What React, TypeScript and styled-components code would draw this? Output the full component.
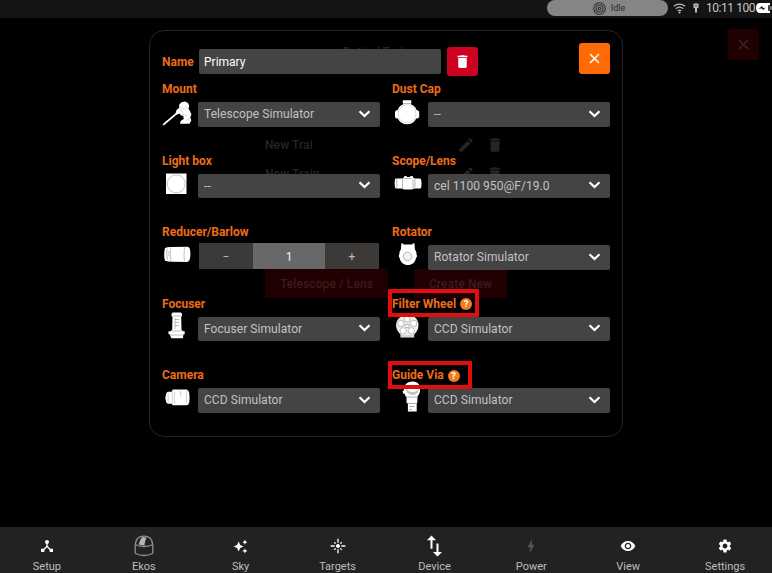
import React from "react";
import styled, { createGlobalStyle } from "styled-components";
import {
  MdAutoAwesome,
  MdBolt,
  MdDelete,
  MdDeviceHub,
  MdEdit,
  MdFlare,
  MdSettings,
  MdVisibility,
} from "react-icons/md";

const GlobalStyle = createGlobalStyle`
  * { box-sizing: border-box; }
  body { margin: 0; background: #000; overflow: hidden; }
  button, input { font: inherit; border: 0; padding: 0; margin: 0; }
  svg { display: block; flex: none; }
`;

const Screen = styled.div`
  width: 772px;
  height: 573px;
  display: grid;
  grid-template-columns: minmax(0, 1fr);
  grid-template-rows: 18px 1fr 46px;
  background: #000;
  font-family: Roboto, "Liberation Sans", sans-serif;
  overflow: hidden;
`;

/* ---------- status bar ---------- */

const StatusBar = styled.header`
  display: flex;
  justify-content: flex-end;
  background: #141414;
  color: #c4c4c4;
  overflow: hidden;
`;

const StatusPill = styled.div`
  width: 121px;
  height: 16px;
  margin-right: 5px;
  border-radius: 8px;
  background: #858585;
  color: #2c2c2c;
  display: flex;
  align-items: center;
  justify-content: center;
  gap: 5px;
  font-size: 9px;
  padding-left: 3px;
`;

const StatusIcons = styled.div`
  width: 32px;
  height: 16px;
  display: flex;
  align-items: center;
  gap: 7px;
`;

const Clock = styled.span`
  height: 17px;
  line-height: 17px;
  width: 51px;
  padding-left: 1px;
  font-size: 12px;
  letter-spacing: -0.45px;
  white-space: nowrap;
`;

const Battery = styled.div`
  width: 16px;
  height: 16px;
  display: flex;
  align-items: center;
`;

/* ---------- page behind the dialog ---------- */

const Main = styled.main`
  position: relative;
`;

const Backdrop = styled.section`
  height: 100%;
  display: flex;
  flex-direction: column;
  padding-top: 11px;
  color: #242424;
  font-weight: 500;
  font-size: 12px;
`;

const BackdropHeader = styled.div`
  height: 32px;
  display: grid;
  grid-template-columns: 1fr auto;
  padding-right: 13px;
  text-align: center;
`;

const BackdropTitle = styled.h1`
  margin: 0;
  padding: 16px 0 0 30px;
  font-size: 12px;
  line-height: 15px;
  font-weight: 500;
`;

const DimClose = styled.button`
  width: 31px;
  height: 31px;
  border-radius: 3px;
  background: #200000;
  display: grid;
  place-items: center;
`;

const TrainList = styled.div`
  display: flex;
  flex-direction: column;
  margin: 69px 0 0 265px;
  height: 121px;
`;

const TrainRow = styled.div`
  display: grid;
  grid-template-columns: 192px 29px 20px;
  align-items: center;
  height: 29px;
  letter-spacing: 0.1px;
`;

const BackdropActions = styled.div`
  display: flex;
  gap: 26px;
  margin: 18px 0 0 265px;
`;

const DimAction = styled.button<{ $width: number }>`
  width: ${(p) => p.$width}px;
  height: 29px;
  background: #200000;
  color: #3c1c1c;
  letter-spacing: 0.1px;
`;

/* ---------- dialog ---------- */

const DialogLayer = styled.div`
  position: absolute;
  inset: 0;
  padding: 12px 0 0 149px;
`;

const Dialog = styled.section`
  width: 474px;
  height: 407px;
  border: 1px solid #252525;
  border-radius: 15px;
  padding: 12px 12px 0 12px;
`;

const DialogHeader = styled.div`
  display: flex;
  height: 36px;
`;

const NameLabel = styled.label`
  width: 37px;
  line-height: 39px;
  font-size: 12px;
  font-weight: 700;
  color: #ee6c18;
`;

const NameInput = styled.input`
  width: 242px;
  height: 25px;
  margin-top: 6px;
  padding: 1px 5px 0;
  border-radius: 2px;
  background: #444;
  color: #fff;
  font-size: 12px;
`;

const SquareButton = styled.button<{ $tone: "danger" | "accent" }>`
  width: 31px;
  height: ${(p) => (p.$tone === "danger" ? 29 : 31)}px;
  margin: ${(p) => (p.$tone === "danger" ? "4px 0 0 6px" : "0 0 0 auto")};
  border-radius: 3px;
  background: ${(p) => (p.$tone === "danger" ? "#cd0220" : "#ff6a05")};
  color: #fff;
  display: grid;
  place-items: center;
`;

const Fields = styled.div`
  display: grid;
  grid-template-columns: 218px 218px;
  column-gap: 12px;
  grid-auto-rows: 71.5px;
`;

const Field = styled.div`
  display: grid;
  grid-template-columns: 36px 182px;
  grid-template-rows: 23px 24.5px;
`;

const FieldHead = styled.div`
  grid-column: 1 / -1;
  display: flex;
`;

const FieldLabel = styled.label`
  position: relative;
  z-index: 1;
  height: 19px;
  padding-top: 1px;
  display: flex;
  align-items: center;
  gap: 4px;
  color: #ee6c18;
  font-size: 12px;
  font-weight: 700;
  white-space: nowrap;
`;

const Highlight = styled.span<{ $right: number }>`
  position: absolute;
  inset: -4.5px ${(p) => -p.$right}px -4.5px -4px;
  border: 4px solid #e20d0d;
  border-radius: 1px;
`;

const HelpBadge = styled.span`
  width: 12px;
  height: 12px;
  margin-top: 1px;
  border-radius: 50%;
  background: #f47a1e;
  color: #fff;
  font-size: 9.5px;
  line-height: 12.5px;
  text-align: center;
`;

const DeviceIcon = styled.div`
  display: flex;
  align-items: center;
  svg { overflow: visible; }
`;

const Select = styled.button`
  height: 24.5px;
  padding: 0 9px 0 6px;
  border-radius: 2px;
  background: #444;
  color: #c2c2c2;
  font-size: 12px;
  letter-spacing: 0.06px;
  display: flex;
  align-items: center;
  justify-content: space-between;
  text-align: left;
  white-space: nowrap;
`;

const Stepper = styled.div`
  height: 26px;
  margin: -2px 0 0 1px;
  display: grid;
  grid-template-columns: 54px 72px 54px;
`;

const StepCell = styled.button<{ $value?: boolean }>`
  background: ${(p) => (p.$value ? "#686868" : "#3b3a39")};
  color: ${(p) => (p.$value ? "#f2f2f2" : "#bcbcbc")};
  font-size: 12px;
  line-height: 16px;
  padding-top: 1px;
  display: grid;
  place-items: center;
`;

/* ---------- bottom navigation ---------- */

const NavBar = styled.nav`
  display: grid;
  grid-template-columns: repeat(8, 96.9px);
  justify-content: center;
  background: #222;
`;

const NavItem = styled.button<{ $dim?: boolean }>`
  display: grid;
  grid-template-rows: 33px 13px;
  height: 46px;
  justify-items: center;
  background: transparent;
  color: #bdbdbd;
  font-size: 11px;
  svg {
    align-self: center;
    margin-top: 5px;
    color: ${(p) => (p.$dim ? "#555" : "#fff")};
  }
  span { line-height: 13px; }
`;

/* ---------- drawings ---------- */

const Chevron = () => (
  <svg width="13" height="9" viewBox="0 0 13 9" fill="none" stroke="#fff" strokeWidth="2.2">
    <path d="M1.5 1.3 6.5 6.1l5-4.8" />
  </svg>
);

const Cross = ({ color = "#fff" }: { color?: string }) => (
  <svg width="11" height="11" viewBox="0 0 11 11" stroke={color} strokeWidth="1.5">
    <path d="m1 1 9 9M10 1l-9 9" />
  </svg>
);

const Art = ({ children, box = "0 0 36 28" }: { children: React.ReactNode; box?: string }) => (
  <svg width="36" height="28" viewBox={box} fill="#fff" stroke="none">
    {children}
  </svg>
);

const MountArt = () => (
  <Art box="0.5 0 36 28">
    <path d="M1 24.200 14 13.200l1.200-3.400L17.500 8l.3-3.600 2.200-2.200 3.500-.7 3 1.500 1.300 3-.8 2.500 1.800 3.200 1.200 2.800-1.200 2.600 1 3.400-1.800 3.300h-9.500l.8-3 3-1.800-.6-3-2.200-.6-1.500-2-3 1.300L2.300 25.600Z" />
    <path d="m18 7 6 2.500m-6-1 3.500 4m2-6 3 2m-6 6 5 1m-1 5 4-2.500" fill="none" stroke="#b8b8b8" strokeWidth=".6" />
  </Art>
);

const LightBoxArt = () => (
  <Art box="0 0.5 36 28">
    <path d="M4 2h20.500v20.500H4Z" />
    <circle cx="14.300" cy="12.300" r="9" fill="none" stroke="#b5b5b5" strokeWidth=".8" />
  </Art>
);

const ReducerArt = () => (
  <Art box="0 0.5 36 28">
    <path d="M3 5.500Q6 4 10 4.500l15-.3q2.500 0 3 2.800.8 5 0 9-.5 3-3 3.500l-15-.2q-4 0-7-1Q1.300 12 3 5.500Z" />
    <path d="M5 6q-1 6 .5 11M9 5q-1.500 7 0 14M22.500 5q-1 7 0 14M6 9l2 1-2 2 2 2" fill="none" stroke="#aaa" strokeWidth=".7" />
  </Art>
);

const FocuserArt = () => (
  <Art box="0 -1 36 28">
    <path d="M9.500-2 10.500-3.500h8.500l1 1.500v2l-.8 1 .3 12.800 1.700 1.500h1.500v3H21.500l-.7 4H9.200l-1.500-4H6.500v-3h2l1.700-1.500L10.500 1l-1-1Z" />
    <path d="M10.500 0h9M13 2v11M13 3.500h4M13 6.500h4M13 9.500h4M9.500 15h11M8 19h13.500" fill="none" stroke="#999" strokeWidth=".65" />
  </Art>
);

const CameraArt = () => (
  <Art box="-0.7 -0.7 36 28">
    <path d="M3.500 6.500 5 5h4l1-2.200h14q2 1 2.500 3.200.8 5 0 10-.5 2-2.500 2.500H10L9 17H5L3.500 15.500Q1.800 11 3.500 6.500Z" />
    <path d="M5.500 6v10M9.500 4v13M18 4v6M12 5q-1 6 0 12M24 4v13" fill="none" stroke="#bbb" strokeWidth=".7" />
  </Art>
);

const DustCapArt = () => (
  <Art>
    <path d="M10.800.300h8.500v3l-.5 1q4.500 1.700 5.700 5.700 2.400 0 2.700 2v5q-.5 1.500-3 1.500-2.600 5.700-9.200 5.800-6.400 0-9.200-5.800-2.500 0-2.800-1.500v-5q.5-2 2.800-2 1.200-4 5.500-5.700l-.5-1Z" />
    <circle cx="15" cy="13.800" r="9" fill="none" stroke="#ccc" strokeWidth=".7" />
    <path d="M11 3.500h8" stroke="#999" strokeWidth=".7" />
  </Art>
);

const ScopeArt = () => (
  <Art box="0 0.5 36 28">
    <path d="M3 7.500 4 7h6l1.500-.5 1-2h2l.5 1h3l.5-1h2l1 2 1 .5h5.500q1 .2 1.200 1.200.7 4 0 8-.2.800-1.200.8H22l-2 1h-8l-2-1H4l-1-.8q-.8-4.500 0-8.700Z" />
    <path d="M4.800 7.500v9M10.500 7.500v9M21 7.500v9M23 8v8M12 7h8" fill="none" stroke="#999" strokeWidth=".7" />
  </Art>
);

const RotatorArt = () => (
  <Art box="-0.4 0.5 36 28">
    <path d="M9 .800 10.500 1l.7 1h8.600l.7-1 1.500-.2.500 6 1.500 3v2l.5.800v2l-.8.700q-.8 5-5.200 6.700-3 1-6 0-4.500-1.500-5.300-6.700l-.7-.7v-2l.5-.8v-2l1.500-3Z" />
    <circle cx="15.200" cy="14" r="4.300" fill="#f2f2f2" stroke="#aaa" strokeWidth=".9" />
  </Art>
);

const FilterWheelArt = () => (
  <Art box="0 -1.500 36 28">
    <path d="M9 0Q15-3 22 0q4.500 3.500 4.500 8.500 0 5.500-4.300 9.500v3H8.500v-3Q4.200 14 4 8.500 4.200 3 9 0Z" fill="#eee" />
    <g fill="#fff" stroke="#a0a0a0" strokeWidth=".7">
      <circle cx="15.200" cy="2.500" r="3" />
      <circle cx="8.800" cy="7" r="3.200" />
      <circle cx="21.700" cy="7" r="3.200" />
      <circle cx="11.200" cy="14.300" r="3.200" />
      <circle cx="19.300" cy="14.300" r="3.200" />
      <path d="m13 8 4.500 0-1 3h-2.500ZM9 19.500h13" />
    </g>
  </Art>
);

const GuideArt = () => (
  <Art box="-1 -2.500 36 28">
    <path d="M12.500-4Q15-7 19.500-7T26-4l1 3v4q-.5 3-2.500 5v1.500l-.2 4.500-.6 1v8h-8.800v-8l-1.400-1V8.500q-1.500-1-2-3.500l-1 .5-1-2.500 1-.8Z" />
    <path d="M13-1q1.500 4.500 6.500 4.500T26-1l-1 5q-2.500 2.500-5.500 2.500T14 4Z" fill="#c4c4c4" />
    <path d="M13 8.500h11.500M14 15h9.500M16 18h5.500M16 21h3" stroke="#888" strokeWidth=".7" fill="none" />
  </Art>
);

const EkosDome = () => (
  <svg width="20" height="22" viewBox="0 0 20 22" fill="none" stroke="#8f8f8f" strokeWidth="1.300">
    <path d="M1.200 10Q2 1.200 10 1.200T18.800 10v8.200Q15 20.500 10 20.500t-8.800-2.300Z" />
    <path d="M1.200 9.500Q4.500 11.500 10 11.500t8.800-2" />
    <path d="M4.800 9.800Q6 3.500 8.800 2l4 .8Q11 5 10.500 10.500Z" fill="#b5b5b5" stroke="none" />
  </svg>
);

const SwapArrows = () => (
  <svg width="17" height="22" viewBox="0 0 17 22" fill="currentColor">
    <path d="M5.500.500 10 5.300H6.500v8.500H4.500V5.300H1ZM11.500 21.500 7 17h3.500V8.500h2V17H16Z" />
  </svg>
);

const Wifi = () => (
  <svg width="13" height="12" viewBox="0 0 13 12" fill="none" stroke="#bbb" strokeWidth="1.200">
    <path d="M.8 4.300Q6.500 0 12.200 4.300M2.800 6.700Q6.500 3.700 10.200 6.700M4.700 8.900q1.800-1.400 3.600 0" />
    <circle cx="6.500" cy="10.500" r=".5" />
  </svg>
);

const UsbKey = () => (
  <svg width="6" height="10" viewBox="0 0 6 10" fill="#bbb">
    <path d="M.5.500h5v4L4 5.500v4H2v-4L.5 4.500Z" />
    <circle cx="3" cy="2.700" r=".8" fill="#333" />
  </svg>
);

const IdleTarget = () => (
  <svg width="13" height="13" viewBox="0 0 12 12" fill="none" stroke="#303030" strokeWidth="1">
    <circle cx="6" cy="6" r="5.300" />
    <circle cx="6" cy="6" r="3.200" />
    <circle cx="6" cy="6" r="1.200" />
  </svg>
);

const BatteryArt = () => (
  <svg width="16" height="10" viewBox="0 0 16 10">
    <path d="M4 0h10v2.300h-1.800v5.400H14V10H4Q0 10 0 5t4-5Z" fill="#fff" />
    <path d="M2.500 5.700 6.200 3l1 2.200L9.800 4.500 7 7.300 6 5.600Z" fill="#222" />
    <path d="M13.500 3.300h2.500v3.400h-2.500Z" fill="#777" />
  </svg>
);

/* ---------- data ---------- */

type FieldSpec = {
  label: string;
  art: () => React.ReactElement;
  value?: string;
  step?: number;
  markRight?: number;
};

const fields: FieldSpec[] = [
  { label: "Mount", art: MountArt, value: "Telescope Simulator" },
  { label: "Dust Cap", art: DustCapArt, value: "--" },
  { label: "Light box", art: LightBoxArt, value: "--" },
  { label: "Scope/Lens", art: ScopeArt, value: "cel 1100 950@F/19.0" },
  { label: "Reducer/Barlow", art: ReducerArt, step: 1 },
  { label: "Rotator", art: RotatorArt, value: "Rotator Simulator" },
  { label: "Focuser", art: FocuserArt, value: "Focuser Simulator" },
  { label: "Filter Wheel", art: FilterWheelArt, value: "CCD Simulator", markRight: 7 },
  { label: "Camera", art: CameraArt, value: "CCD Simulator" },
  { label: "Guide Via", art: GuideArt, value: "CCD Simulator", markRight: 12 },
];

const navItems = [
  { label: "Setup", icon: <MdDeviceHub size={16} /> },
  { label: "Ekos", icon: <EkosDome /> },
  { label: "Sky", icon: <MdAutoAwesome size={15} /> },
  { label: "Targets", icon: <MdFlare size={16} /> },
  { label: "Device", icon: <SwapArrows /> },
  { label: "Power", icon: <MdBolt size={16} />, dim: true },
  { label: "View", icon: <MdVisibility size={16} /> },
  { label: "Settings", icon: <MdSettings size={16} /> },
];

const trains = ["New Trai", "New Train"];

export default function App() {
  return (
    <Screen>
      <GlobalStyle />
      <StatusBar>
        <StatusPill>
          <IdleTarget />
          Idle
        </StatusPill>
        <StatusIcons>
          <Wifi />
          <UsbKey />
        </StatusIcons>
        <Clock>10:11 100</Clock>
        <Battery>
          <BatteryArt />
        </Battery>
      </StatusBar>

      <Main>
        <Backdrop>
          <BackdropHeader>
            <BackdropTitle>Optical Trains</BackdropTitle>
            <DimClose>
              <Cross color="#3c2626" />
            </DimClose>
          </BackdropHeader>
          <TrainList>
            {trains.map((name) => (
              <TrainRow key={name}>
                {name}
                <MdEdit size={18} />
                <MdDelete size={18} />
              </TrainRow>
            ))}
          </TrainList>
          <BackdropActions>
            <DimAction $width={123}>Telescope / Lens</DimAction>
            <DimAction $width={93}>Create New</DimAction>
          </BackdropActions>
        </Backdrop>

        <DialogLayer>
          <Dialog>
            <DialogHeader>
              <NameLabel>Name</NameLabel>
              <NameInput defaultValue="Primary" />
              <SquareButton $tone="danger">
                <MdDelete size={17} />
              </SquareButton>
              <SquareButton $tone="accent">
                <Cross />
              </SquareButton>
            </DialogHeader>
            <Fields>
              {fields.map(({ label, art: Drawing, value, step, markRight }) => (
                <Field key={label}>
                  <FieldHead>
                    <FieldLabel>
                      {label}
                      {markRight !== undefined && (
                        <>
                          <HelpBadge>?</HelpBadge>
                          <Highlight $right={markRight} />
                        </>
                      )}
                    </FieldLabel>
                  </FieldHead>
                  <DeviceIcon>
                    <Drawing />
                  </DeviceIcon>
                  {step !== undefined ? (
                    <Stepper>
                      <StepCell>−</StepCell>
                      <StepCell $value>{step}</StepCell>
                      <StepCell>+</StepCell>
                    </Stepper>
                  ) : (
                    <Select>
                      {value}
                      <Chevron />
                    </Select>
                  )}
                </Field>
              ))}
            </Fields>
          </Dialog>
        </DialogLayer>
      </Main>

      <NavBar>
        {navItems.map(({ label, icon, dim }) => (
          <NavItem key={label} $dim={dim}>
            {icon}
            <span>{label}</span>
          </NavItem>
        ))}
      </NavBar>
    </Screen>
  );
}
